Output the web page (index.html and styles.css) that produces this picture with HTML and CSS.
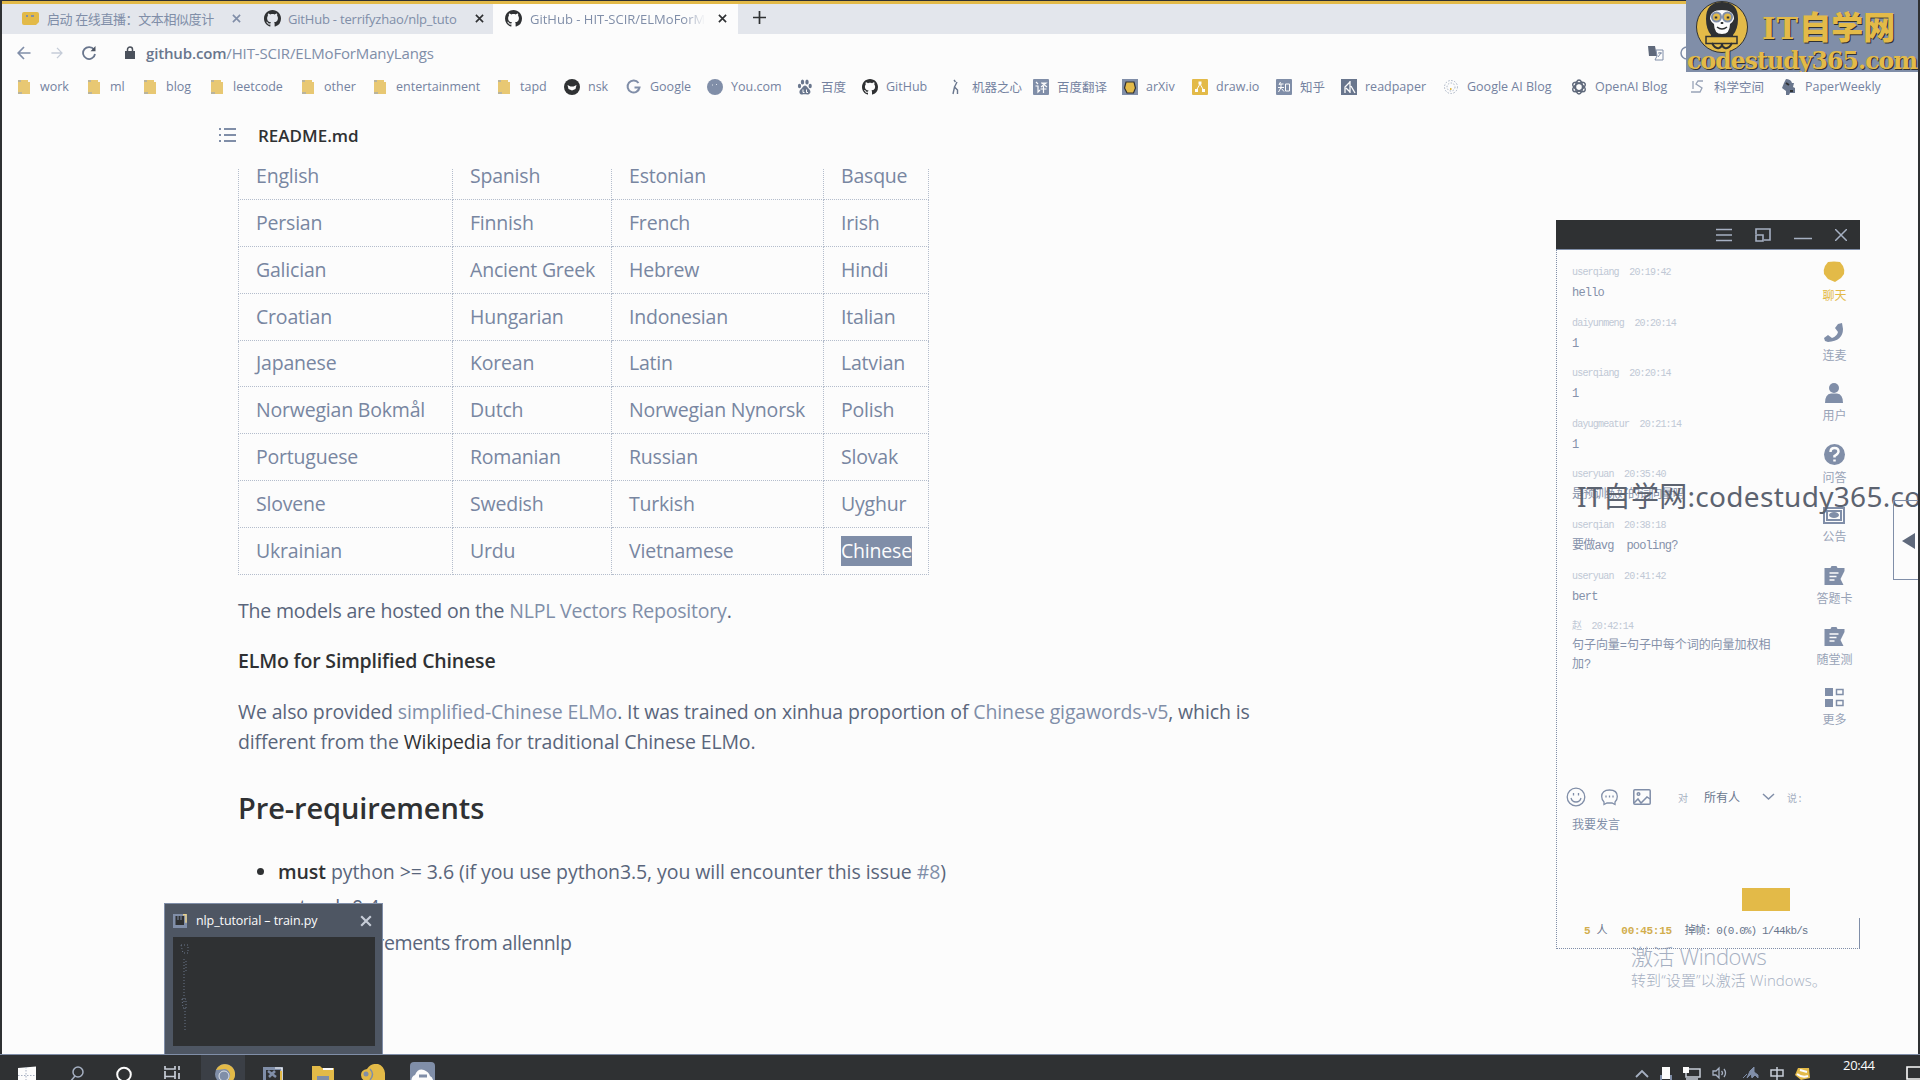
FILE: index.html
```html
<!DOCTYPE html>
<html lang="zh-CN">
<head>
<meta charset="utf-8">
<title>GitHub - HIT-SCIR/ELMoForManyLangs</title>
<link rel="stylesheet" href="styles.css">
</head>
<body>
<svg class="defs" width="0" height="0">
  <symbol id="gh" viewBox="0 0 16 16"><path fill="currentColor" d="M8 0C3.58 0 0 3.58 0 8c0 3.54 2.29 6.53 5.47 7.59.4.07.55-.17.55-.38 0-.19-.01-.82-.01-1.49-2.01.37-2.53-.49-2.69-.94-.09-.23-.48-.94-.82-1.13-.28-.15-.68-.52-.01-.53.63-.01 1.08.58 1.23.82.72 1.21 1.87.87 2.33.66.07-.52.28-.87.51-1.07-1.78-.2-3.64-.89-3.64-3.95 0-.87.31-1.59.82-2.15-.08-.2-.36-1.02.08-2.12 0 0 .67-.21 2.2.82.64-.18 1.32-.27 2-.27s1.36.09 2 .27c1.53-1.04 2.2-.82 2.2-.82.44 1.1.16 1.92.08 2.12.51.56.82 1.27.82 2.15 0 3.07-1.87 3.75-3.65 3.95.29.25.54.73.54 1.48 0 1.07-.01 1.93-.01 2.2 0 .21.15.46.55.38A8.01 8.01 0 0 0 16 8c0-4.42-3.58-8-8-8z"/></symbol>
  <symbol id="folder" viewBox="0 0 16 16"><path fill="#e8c873" d="M2 1h10v2h2v12H2z"/><path fill="#b9b49c" d="M2 1h3v2H2zM2 13h4v2H2z"/></symbol>
  <symbol id="x" viewBox="0 0 10 10"><path d="M1 1l8 8M9 1L1 9" stroke="currentColor" stroke-width="1.8" fill="none"/></symbol>
  <symbol id="clip" viewBox="0 0 20 20"><path fill="currentColor" d="M0 2h6l1-2h5l1 2h7v3l-4 8 3 6H0z"/><path d="M5 7h9M5 10.500h7M5 14h5" stroke="#fcfcfc" stroke-width="1.300"/></symbol>
</svg>
<div class="screen">
  <header class="tabs">
    <div class="tab t1"><svg width="17" height="14" viewBox="0 0 17 14"><path fill="#e3ba48" d="M0 2q0-2 2-2h13q2 0 2 2v8l-3 3H2q-2 0-2-2z"/><path d="M4 4h2M9 4h3" stroke="#808ea8" stroke-width="2"/></svg><span>启动 在线直播：文本相似度计</span><svg class="cl" width="9" height="9"><use href="#x"/></svg></div>
    <div class="tab t2"><svg class="dk" width="17" height="17"><use href="#gh"/></svg><span>GitHub - terrifyzhao/nlp_tuto</span><svg class="cl dk" width="9" height="9"><use href="#x"/></svg></div>
    <div class="tab t3"><svg class="dk" width="17" height="17"><use href="#gh"/></svg><span>GitHub - HIT-SCIR/ELMoForM</span><svg class="cl dk" width="9" height="9"><use href="#x"/></svg></div>
    <div class="plus"><svg width="13" height="13" viewBox="0 0 13 13"><path d="M6.500 0v13M0 6.500h13" stroke="#2f3133" stroke-width="1.700"/></svg></div>
  </header>
  <div class="address">
    <svg width="14" height="14" viewBox="0 0 14 14"><path d="M13.500 7H1.500M7 1L1.200 7 7 13" fill="none" stroke="#808ea8" stroke-width="1.700"/></svg>
    <svg class="fw" width="12" height="12" viewBox="0 0 14 14"><path d="M.5 7h12M7 1l5.800 6L7 13" fill="none" stroke="#c5ccd8" stroke-width="1.500"/></svg>
    <svg class="re" width="14" height="14" viewBox="0 0 14 14"><path d="M12 3.600A6 6 0 1 0 13 8" fill="none" stroke="#69768d" stroke-width="1.800"/><path d="M13.500 0v5.200H8.500z" fill="#4c5462"/></svg>
    <svg class="lock" width="10" height="13" viewBox="0 0 10 13"><path fill="#4b515c" d="M0 5h10v8H0z"/><path d="M2.500 6V3.500a2.500 2.500 0 0 1 5 0V6" fill="none" stroke="#4b515c" stroke-width="1.500"/></svg>
    <span class="url"><b>github.com</b>/HIT-SCIR/ELMoForManyLangs</span>
    <svg class="tr" width="16" height="16" viewBox="0 0 16 16"><path fill="#5f697b" d="M0 1h7l2 10H1z"/><path d="M8 5h7v10H7l2-4z" fill="none" stroke="#808ea8"/><path d="M10 8h4M12 7v1M10 12l3-4" stroke="#808ea8"/></svg>
    <svg class="sr" width="14" height="14" viewBox="0 0 14 14"><circle cx="7" cy="7" r="6" fill="none" stroke="#808ea8" stroke-width="1.500"/></svg>
  </div>
  <nav class="marks">
    <div><svg><use href="#folder"/></svg>work</div>
    <div><svg><use href="#folder"/></svg>ml</div>
    <div><svg><use href="#folder"/></svg>blog</div>
    <div><svg><use href="#folder"/></svg>leetcode</div>
    <div><svg><use href="#folder"/></svg>other</div>
    <div><svg><use href="#folder"/></svg>entertainment</div>
    <div><svg><use href="#folder"/></svg>tapd</div>
    <div><svg viewBox="0 0 16 16"><circle cx="8" cy="8" r="8" fill="#2f3133"/><path fill="#fcfcfc" d="M3.500 6l3 1.500h3l3-1.500-1 4-3.500 1.500L4.500 10z"/></svg>nsk</div>
    <div><svg viewBox="0 0 16 16"><path d="M12.500 4A6 6 0 1 0 13.500 8.500H8.500" fill="none" stroke="#808ea8" stroke-width="2"/></svg>Google</div>
    <div><svg viewBox="0 0 16 16"><circle cx="8" cy="8" r="8" fill="#808ea8"/><path d="M5 6h1M9 5.500h1" stroke="#dde1e8"/></svg>You.com</div>
    <div><svg viewBox="0 0 16 16" fill="#69768d"><ellipse cx="5.500" cy="3" rx="1.700" ry="2.600"/><ellipse cx="10" cy="3" rx="1.700" ry="2.600"/><ellipse cx="2.500" cy="7" rx="1.600" ry="2.200"/><ellipse cx="13.200" cy="7" rx="1.600" ry="2.200"/><path d="M8 6.500c2 0 2.500 2.500 4.500 4 2 2.500.5 5-2 5-1.500 0-3.500-.5-5 0-3 .5-4-3-2-5C5.500 9 6 6.500 8 6.500z"/><path d="M6 10.500v3h1.500M9.500 10.500v3H11" stroke="#fcfcfc" fill="none"/></svg>百度</div>
    <div><svg class="dk"><use href="#gh"/></svg>GitHub</div>
    <div><svg viewBox="0 0 16 16"><path d="M6 1l1.500 2M9 3L6.500 8l3 3v4M6.500 8L5 15" fill="none" stroke="#69768d" stroke-width="1.400"/></svg>机器之心</div>
    <div><svg viewBox="0 0 16 16"><rect width="16" height="16" rx="1" fill="#808ea8"/><path d="M3 3l2 2M2.500 7H5v6l2-2M8 4h5l-5 4M9 4l5 4M7.500 10h6M10.500 7v7" stroke="#fcfcfc" fill="none" stroke-width="1.200"/></svg>百度翻译</div>
    <div><svg viewBox="0 0 16 16"><rect width="16" height="16" fill="#808ea8"/><path fill="#e3ba48" stroke="#2f3133" stroke-width="1.200" d="M4 3h8l1.500 6-2 5H5L2.500 9z"/></svg>arXiv</div>
    <div><svg viewBox="0 0 16 16"><rect width="16" height="16" rx="1" fill="#e3ba48"/><path d="M8 5L4.500 11M8 5l3.500 6" stroke="#fcfcfc"/><path fill="#fcfcfc" d="M6.500 2.500h3v3h-3zM3 10h3v3H3zM10 10h3v3h-3z"/></svg>draw.io</div>
    <div><svg viewBox="0 0 16 16"><rect width="16" height="16" rx="1" fill="#808ea8"/><path d="M4.500 3L3 6M3 5h4.500M2 8.500h6M5 5v3.500L2.500 13M5.500 9.500L8 12.500M9.500 5h4v7h-4z" stroke="#fcfcfc" fill="none"/></svg>知乎</div>
    <div><svg viewBox="0 0 16 16"><path fill="#69768d" d="M0 0h16v16H0z"/><path d="M9 2v12M9 3L4 8v6M5 9l4 4M10 7l4 7" stroke="#fcfcfc" stroke-width="1.300" fill="none"/></svg>readpaper</div>
    <div><svg viewBox="0 0 16 16"><g fill="none" stroke="#a9b3c4" stroke-dasharray="1.500 1.500"><circle cx="8" cy="8" r="6.500"/><circle cx="8" cy="8" r="4"/></g><path d="M7 9h1.500v2H7z" fill="#e3ba48"/></svg>Google AI Blog</div>
    <div><svg viewBox="0 0 16 16"><g fill="none" stroke="#5f697b" stroke-width="1.500"><ellipse cx="8" cy="8" rx="3.500" ry="7"/><ellipse cx="8" cy="8" rx="3.500" ry="7" transform="rotate(60 8 8)"/><ellipse cx="8" cy="8" rx="3.500" ry="7" transform="rotate(120 8 8)"/></g></svg>OpenAI Blog</div>
    <div><svg viewBox="0 0 16 16"><path d="M13 2H8L6 5l6 4-2 4H1M3 2v8" fill="none" stroke="#98a3b7" stroke-width="1.300"/></svg>科学空间</div>
    <div><svg viewBox="0 0 16 16"><path fill="#69768d" d="M5 0c3 0 5 1 6 4h2l-1 4 2 1v5H9l-1 2H5v-4L1 9l2-5z"/><path d="M5 4l3 2M9 12h3" stroke="#2f3133" stroke-width="2"/></svg>PaperWeekly</div>
  </nav>
  <div class="readme">
    <svg width="18" height="16" viewBox="0 0 18 16"><path d="M0 2h2M0 8h2M0 14h2M5 2h12M5 8h12M5 14h12" stroke="#808ea8" stroke-width="1.900"/></svg>
    <span>README.md</span>
  </div>
  <main>
    <table>
      <tr><td>English<td>Spanish<td>Estonian<td>Basque</tr>
      <tr><td>Persian<td>Finnish<td>French<td>Irish</tr>
      <tr><td>Galician<td>Ancient Greek<td>Hebrew<td>Hindi</tr>
      <tr><td>Croatian<td>Hungarian<td>Indonesian<td>Italian</tr>
      <tr><td>Japanese<td>Korean<td>Latin<td>Latvian</tr>
      <tr><td>Norwegian Bokmål<td>Dutch<td>Norwegian Nynorsk<td>Polish</tr>
      <tr><td>Portuguese<td>Romanian<td>Russian<td>Slovak</tr>
      <tr><td>Slovene<td>Swedish<td>Turkish<td>Uyghur</tr>
      <tr><td>Ukrainian<td>Urdu<td>Vietnamese<td><mark>Chinese</mark></tr>
    </table>
    <p class="p1">The models are hosted on the <a>NLPL Vectors Repository</a>.</p>
    <h4>ELMo for Simplified Chinese</h4>
    <p class="p2">We also provided <a>simplified-Chinese ELMo</a>. It was trained on xinhua proportion of <a>Chinese gigawords-v5</a>, which is<br>different from the <i>Wikipedia</i> for traditional Chinese ELMo.</p>
    <h2>Pre-requirements</h2>
    <ul>
      <li><b>must</b> python &gt;= 3.6 (if you use python3.5, you will encounter this issue <a>#8</a>)</li>
      <li>pytorch 0.4</li>
      <li class="last">other requirements from allennlp</li>
    </ul>
  </main>
  <footer class="task">
    <svg class="k1" width="18" height="18" viewBox="0 0 18 18"><path fill="#fcfcfc" d="M0 2l18-1.500V18L0 17z"/><path d="M0 9.500h18M8 1v17" stroke="#a6b0c2" stroke-dasharray="1.500 1.500"/></svg>
    <svg class="k2" width="14" height="18" viewBox="0 0 14 18"><circle cx="8" cy="6" r="5" fill="none" stroke="#a6b0c2" stroke-width="1.500"/><path d="M5 10L0 16" stroke="#a6b0c2" stroke-width="1.500"/></svg>
    <svg class="k3" width="16" height="18" viewBox="0 0 16 18"><circle cx="8" cy="8.500" r="6.800" fill="none" stroke="#fcfcfc" stroke-width="2"/></svg>
    <svg class="k4" width="17" height="16" viewBox="0 0 17 16"><path d="M1 0v3h10V0M1 13V5M11 5v8M1 10.500h10M15 0v4M15 7v6" fill="none" stroke="#c7cdd8" stroke-width="1.700"/></svg>
    <div class="chrome"><svg width="20" height="20" viewBox="0 0 20 20"><circle cx="10" cy="10" r="10" fill="#808ea8"/><path fill="#e3ba48" d="M1 6a10 10 0 1 1 11 14l3-8a6 6 0 0 0-5-7z"/><circle cx="9" cy="12" r="5" fill="#808ea8" stroke="#dde1e8" stroke-width="1"/></svg></div>
    <svg class="k6" width="20" height="20" viewBox="0 0 20 20"><path d="M0 1h20v19H0z" fill="#808ea8"/><path d="M3 4h14v16H3z" fill="#2f3133"/><path d="M5 5l8 6M12 5l-6 6" stroke="#808ea8" stroke-width="2.500" fill="none"/><path d="M12 2h7v14" fill="none" stroke="#fcfcfc" stroke-width="1.200"/><path d="M18 5v10" stroke="#e3ba48" stroke-width="2"/></svg>
    <svg class="k7" width="22" height="18" viewBox="0 0 22 18"><path d="M0 0h8l2 2h12v16H0z" fill="#e3ba48"/><path d="M11 3h10" stroke="#fcfcfc" stroke-width="2"/><path d="M5 10h12v8H5z" fill="#808ea8"/></svg>
    <svg class="k8" width="24" height="20" viewBox="0 0 24 20"><path fill="#e3ba48" d="M6 5q4-6 11-5 6 2 7 9v8H5q-5-1-5-6 0-5 6-6z"/><circle cx="5" cy="10" r="2.500" fill="#808ea8"/><path d="M9 5q5 5 0 11" stroke="#808ea8" stroke-width="1.500" fill="none"/></svg>
    <svg class="k9" width="25" height="22" viewBox="0 0 25 22"><rect width="25" height="26" rx="4" fill="#808ea8"/><path fill="#fcfcfc" d="M2 22q-2-7 3-9 3-7 9-5 5 2 6 6 4 2 3 8z"/><path d="M9 14h8" stroke="#808ea8" stroke-width="3"/></svg>
    <div class="tray">
      <svg width="14" height="14" viewBox="0 0 14 14"><path d="M1 11l6-6 6 6" fill="none" stroke="#a6b0c2" stroke-width="1.800"/></svg>
      <svg width="12" height="14" viewBox="0 0 12 14"><path fill="#fcfcfc" d="M2 1h8v12H2z"/><path fill="#808ea8" d="M0 9h2v5h8V9h2v5H0z"/></svg>
      <svg width="18" height="14" viewBox="0 0 18 14"><path d="M3 3h14v8H3zM3 13h12" fill="none" stroke="#c7cdd8" stroke-width="1.500"/><path fill="#fcfcfc" d="M0 1h6v6H0z"/></svg>
      <svg width="15" height="14" viewBox="0 0 15 14"><path d="M1 5h3l3-3v10L4 9H1zM9.500 5q2 2 0 4M12 3q3 4 0 8" fill="none" stroke="#a6b0c2" stroke-width="1.300"/></svg>
      <svg width="17" height="14" viewBox="0 0 17 14"><path d="M1 12l4-4M5 12l3-7 4-4v5l4 3v3l-3-3-3 3-1-4z" fill="#808ea8" stroke="#808ea8"/></svg>
      <svg width="14" height="14" viewBox="0 0 14 14"><path d="M1 4h12v6H1zM7 1v13" fill="none" stroke="#c7cdd8" stroke-width="1.500"/></svg>
      <svg width="15" height="14" viewBox="0 0 15 14"><path fill="#e3ba48" d="M3 2h11l1 10-9 2-6-5z"/><path d="M2 8q5 4 11 2M5 4l7 2" stroke="#fcfcfc" stroke-width="2" fill="none"/></svg>
      <time>20:44</time>
      <svg width="14" height="14" viewBox="0 0 14 14"><path d="M14 1H1v12h13" fill="none" stroke="#fcfcfc" stroke-width="1.600"/></svg>
    </div>
  </footer>
</div>

<div class="winmark"><div>激活 Windows</div><small>转到“设置”以激活 Windows。</small></div>

<aside class="chat">
  <div class="bar">
    <svg width="16" height="14" viewBox="0 0 16 14"><path d="M0 1.500h16M0 7h16M0 12.500h16" stroke="#a6b0c2" stroke-width="1.500"/></svg>
    <svg width="16" height="14" viewBox="0 0 16 14"><path d="M1 6V1h14v11H9M1 7h7v6H1z" fill="none" stroke="#a6b0c2" stroke-width="1.600"/></svg>
    <svg width="18" height="14" viewBox="0 0 18 14"><path d="M0 10.500h18" stroke="#a6b0c2" stroke-width="1.500"/></svg>
    <svg width="12" height="12" viewBox="0 0 12 12"><path d="M0 0l12 12M12 0L0 12" stroke="#a6b0c2" stroke-width="1.500"/></svg>
  </div>
  <div class="mid">
    <div class="log">
      <dl><dt>userqiang&nbsp; 20:19:42</dt><dd>hello</dd></dl>
      <dl><dt>daiyunmeng&nbsp; 20:20:14</dt><dd>1</dd></dl>
      <dl><dt>userqiang&nbsp; 20:20:14</dt><dd>1</dd></dl>
      <dl><dt>dayugmeatur&nbsp; 20:21:14</dt><dd>1</dd></dl>
      <dl><dt>useryuan&nbsp; 20:35:40</dt><dd>是预训练好的词向量吗</dd></dl>
      <dl><dt>userqian&nbsp; 20:38:18</dt><dd>要做avg&nbsp; pooling?</dd></dl>
      <dl><dt>useryuan&nbsp; 20:41:42</dt><dd>bert</dd></dl>
      <dl><dt>赵&nbsp; 20:42:14</dt><dd>句子向量=句子中每个词的向量加权相<br>加?</dd></dl>
    </div>
    <div class="side">
      <div class="on"><svg width="22" height="22" viewBox="0 0 22 22"><path fill="#e3ba48" d="M5 1q6-1 12 0l3 4q2 4 1 8l-3 4-6 4-7-3-4-5q-1-4 1-8z"/></svg>聊天</div>
      <div><svg width="20" height="20" viewBox="0 0 20 20"><path fill="#808ea8" d="M14 1l4-1 1 6q0 12-15 13l-3-1-1-3 4-3 4 3q5-2 6-6l-3-4z"/></svg>连麦</div>
      <div><svg width="18" height="20" viewBox="0 0 18 20"><circle cx="9" cy="5" r="5" fill="#808ea8"/><path fill="#808ea8" d="M0 20q0-9 6-9.500h6q6 .5 6 9.500z"/></svg>用户</div>
      <div><svg width="21" height="21" viewBox="0 0 21 21"><circle cx="10.500" cy="10.500" r="10.500" fill="#808ea8"/><path d="M6.500 8q0-4 4-4t4 3.500q0 2-4 4.500v1.500M10.500 15.500v2" fill="none" stroke="#fcfcfc" stroke-width="2.500"/></svg>问答</div>
      <div><svg width="22" height="18" viewBox="0 0 22 18"><path d="M1 2h20v15H1zM4 5h14v9H4z" fill="none" stroke="#808ea8" stroke-width="2"/><ellipse cx="11" cy="9" rx="5" ry="3" fill="#808ea8"/></svg>公告</div>
      <div><svg class="cp" width="21" height="20"><use href="#clip"/></svg>答题卡</div>
      <div><svg class="cp" width="21" height="20"><use href="#clip"/></svg>随堂测</div>
      <div><svg width="19" height="19" viewBox="0 0 19 19"><path fill="#808ea8" d="M0 0h8v8H0zM0 11h8v8H0z"/><path d="M11.500 1.500h6.500v5h-6.500zM11.500 12.500h6.500v5h-6.500z" fill="none" stroke="#808ea8" stroke-width="1.500"/></svg>更多</div>
    </div>
  </div>
  <div class="tools">
    <svg width="20" height="20" viewBox="0 0 20 20" fill="none" stroke="#808ea8" stroke-width="1.300"><circle cx="10" cy="10" r="8.800"/><path d="M7.500 6v2.500M12.500 6v2.500M5 11q1 4 5 4t5-4"/></svg>
    <svg width="17" height="17" viewBox="0 0 17 17" fill="none" stroke="#808ea8" stroke-width="1.300"><path d="M3 15.500V13Q.7 11 .7 7.500.7 1 8.500 1t7.800 6.500Q16.300 11 14 13v2.500L11 14H6z"/><path d="M5 6.500v2M8.500 6.500v2M12 6.500v2"/></svg>
    <svg width="18" height="16" viewBox="0 0 18 16" fill="none" stroke="#808ea8" stroke-width="1.500"><rect x=".8" y=".8" width="16.400" height="14.400" rx="1"/><path d="M1 14l4-4 3 4 6-6 3 2"/><circle cx="5.500" cy="5" r="1.300"/></svg>
    <span class="at">对</span><span class="all">所有人</span>
    <svg class="chev" width="13" height="8" viewBox="0 0 13 8"><path d="M1 1l5.500 5L12 1" fill="none" stroke="#808ea8" stroke-width="1.500"/></svg>
    <span class="at">说:</span>
  </div>
  <div class="ph">我要发言</div>
  <button></button>
  <div class="stat"><em>5</em>&nbsp;人<em class="tm">00:45:15</em><span>掉帧: 0(0.0%) 1/44kb/s</span></div>
</aside>

<div class="water">IT自学网:codestudy365.com</div>
<div class="pull"><svg width="13" height="16" viewBox="0 0 13 16"><path fill="#5f697b" d="M13 0v16L0 8z"/></svg></div>

<div class="preview">
  <div class="ptitle"><svg width="14" height="14" viewBox="0 0 14 14"><path fill="#808ea8" d="M0 0h14v14H0z"/><path fill="#2f3133" d="M2.500 2h8.500v9H2.500z"/><path d="M5 2v4M8 2v4" stroke="#808ea8"/><path d="M10 .8h3v8" fill="none" stroke="#e9d28d" stroke-width="1.500"/></svg><span>nlp_tutorial – train.py</span><svg class="px" width="12" height="12"><use href="#x"/></svg></div>
  <div class="pbody"><svg width="10" height="90" viewBox="0 0 10 90" fill="none" stroke="#6b768a" stroke-dasharray="1 2"><path d="M1 1h7v8H3zM4 15v45M6 17v10M2 55h4v9H3zM5 64v22"/></svg></div>
</div>

<div class="logo">
  <svg width="54" height="54" viewBox="0 0 54 54"><circle cx="27" cy="27" r="25.500" fill="#e3ba48" stroke="#2f3133"/><path fill="#2f3133" d="M27 2q16 0 16 17 0 10-5 16v4H16v-4q-5-6-5-16Q11 2 27 2z"/><path fill="#fcfcfc" d="M27 10q12 0 12 9-1 3-4 5 0 10-8 10t-8-10q-3-2-4-5 0-9 12-9z"/><g fill="#e3ba48" stroke="#808ea8" stroke-width="2"><circle cx="21.500" cy="17" r="4.500"/><circle cx="32.500" cy="17" r="4.500"/></g><path d="M21 16.500v2M33 16.500v2M27 22v2" stroke="#2f3133" stroke-width="2.500"/><path d="M22 27q5 4 10 0" fill="none" stroke="#2f3133" stroke-width="1.500"/><path d="M11 36.500h31v7H11z" fill="#e3ba48" stroke="#2f3133" stroke-width="1.500"/><path d="M17 43q3 6 7 5 3-1 3-4 0 3 3 4 4 1 7-5" fill="none" stroke="#2f3133" stroke-width="2"/></svg>
  <div class="l1"><i>IT</i>自学网</div>
  <div class="l2">codestudy365.com</div>
</div>
</body>
</html>
```
FILE: styles.css
```css
* { box-sizing: border-box; }
body { margin: 0; width: 1920px; height: 1080px; overflow: hidden; position: relative; background: #fcfcfc; color: #69768d; font-family: "Open Sans", "Noto Sans CJK SC", sans-serif; }
svg { display: block; flex: none; }
.defs { position: absolute; }
.dk { color: #2f3133; }
.screen { width: 1920px; height: 1080px; border: 2px solid #2f3133; border-width: 1px 2px 0; display: flex; flex-direction: column; }
.tabs { height: 33px; border-top: 3px solid #e3ba48; display: flex; flex: none; }
.tab { display: flex; align-items: center; font-size: 13px; white-space: nowrap; background: #e3e6ec; color: #808ea8; padding-bottom: 1px; }
.tab span { overflow: hidden; }
.t1 { width: 252px; padding-left: 20px; }
.t1 span { width: 172px; margin-left: 8px; letter-spacing: -.4px; }
.t2 { width: 239px; padding-left: 10px; }
.t2 span { width: 174px; margin-left: 7px; letter-spacing: -.2px; }
.t3 { width: 245px; padding-left: 12px; background: #fcfcfc; }
.t3 span { width: 175px; margin-left: 8px; -webkit-mask-image: linear-gradient(90deg, #000 88%, transparent); mask-image: linear-gradient(90deg, #000 88%, transparent); }
.cl { margin-left: 13px; }
.plus { flex: 1; background: #e3e6ec; padding: 7px 0 0 15px; }
.address { height: 37px; flex: none; display: flex; align-items: center; padding-left: 15px; font-size: 15px; color: #808ea8; }
.fw { margin-left: 20px; }
.re { margin-left: 19px; }
.lock { margin-left: 29px; }
.url { margin-left: 11px; width: 1502px; letter-spacing: -.15px; }
.url b { font-weight: 600; color: #69768d; }
.sr { margin-left: 16px; }
.marks { height: 31px; flex: none; padding-left: 14px; display: grid; grid-template-columns: 70px 56px 67px 91px 72px 124px 68px 62px 81px 90px 65px 86px 85px 89px 70px 84px 65px 102px 128px 119px 91px 130px; align-items: center; font-size: 12.500px; color: #7482a0; }
.marks div { display: flex; align-items: center; gap: 8px; white-space: nowrap; }
.marks svg { width: 16px; height: 16px; }
.readme { height: 66px; flex: none; display: flex; align-items: center; padding-left: 217px; gap: 21px; font-size: 17px; font-weight: 600; color: #2f3133; }
main { padding-left: 236px; flex: 1; min-height: 0; overflow: hidden; font-size: 19.500px; letter-spacing: -.13px; color: #59657b; }
table { border-collapse: collapse; table-layout: fixed; width: 690px; margin-top: -16px; color: #7886a1; letter-spacing: -.2px; }
td { height: 46.875px; padding: 0 0 0 17px; border: 1px dotted #b4bdcc; white-space: nowrap; line-height: 30px; }
td:nth-child(1) { width: 214px; } td:nth-child(2) { width: 159px; } td:nth-child(3) { width: 212px; } td:nth-child(4) { width: 105px; }
mark { background: #808ea8; color: #fcfcfc; display: inline-block; height: 30px; }
p, h2, h4 { margin: 0; white-space: nowrap; }
a { color: #808ea8; }
.p1 { margin-top: 21px; line-height: 30px; letter-spacing: -.2px; }
h4 { margin-top: 20px; line-height: 30px; font-weight: 600; letter-spacing: -.17px; color: #2f3133; }
.p2 { margin-top: 21px; line-height: 30.500px; }
.p2 i { font-style: normal; color: #2f3133; }
h2 { margin-top: 31px; font-size: 29px; letter-spacing: -.1px; line-height: 38px; font-weight: 600; color: #2f3133; }
ul { margin: 30px 0 0; padding-left: 40px; letter-spacing: -.08px; }
li { line-height: 30px; margin-bottom: 5px; white-space: nowrap; }
.last { padding-top: 1px; letter-spacing: -.37px; }
li::marker, li b { color: #2f3133; font-weight: 600; }
.task { height: 26px; margin: 0 -2px; flex: none; background: #2f3133; border-top: 1px solid #808ea8; overflow: hidden; display: flex; align-items: flex-start; padding-left: 18px; }
.task svg { margin-top: 11px; }
.task .k2 { margin-left: 34px; } .task .k3 { margin-left: 32px; } .task .k4 { margin-left: 32px; }
.chrome { width: 44px; height: 26px; margin-left: 20px; background: #3b3f46; padding-left: 14px; }
.task .chrome svg, .task .k8 { margin-top: 9px; }
.task .k6 { margin-left: 18px; } .task .k7 { margin-left: 29px; } .task .k8 { margin-left: 27px; } .task .k9 { margin: 7px 0 0 25px; }
.tray { margin-left: auto; display: flex; gap: 11px; color: #fcfcfc; }
.tray svg:nth-child(5) { margin-left: 4px; }
.tray time { font-size: 13px; line-height: 20px; width: 31px; margin: 0 21px 0 22px; letter-spacing: -.3px; }
.winmark { position: absolute; left: 1631px; top: 940px; color: #a6b0c2; font-size: 22px; line-height: 32px; font-weight: 300; letter-spacing: -.4px; }
.winmark small { font-size: 15px; display: block; line-height: 18px; margin-top: -1px; letter-spacing: .1px; white-space: nowrap; }
.chat { position: absolute; left: 1556px; top: 220px; width: 304px; height: 729px; border: 1px dotted #808ea8; border-width: 0 0 1px 1px; font-size: 12px; font-family: "Liberation Mono", "Noto Sans CJK SC", monospace; }
.bar { height: 30px; margin-left: -1px; background: #2f3133; border-bottom: 1px solid #808ea8; display: flex; justify-content: flex-end; align-items: center; gap: 23px; padding-right: 13px; }
.mid { display: flex; height: 534px; }
.log { padding: 12px 0 0 15px; width: 249px; font-size: 12px; color: #8591aa; }
dl { margin: 0 0 9px; white-space: nowrap; letter-spacing: -.8px; }
dl:last-child dd { letter-spacing: -.05px; line-height: 19px; }
dt { font-size: 10px; line-height: 21px; color: #c0c8d5; }
dd { margin: 0; line-height: 20.600px; }
.side { width: 58px; margin-left: 1px; padding: 3px 0 0 6px; font-size: 12px; }
.side div { height: 60.800px; display: flex; flex-direction: column; align-items: center; justify-content: center; gap: 6px; color: #98a3b7; line-height: 17px; }
.side .cp { color: #808ea8; }
.side .on { color: #e3ba48; }
.tools { height: 28px; display: flex; align-items: center; padding-left: 9px; margin-top: -1px; }
.tools svg + svg { margin-left: 15px; }
.tools .at { margin-left: 27px; font-size: 10px; color: #a6b0c2; } .all { margin-left: 16px; color: #69768d; }
.tools .chev { margin-left: 22px; } .tools .chev + .at { margin-left: 12px; }
.ph { padding: 5px 0 0 15px; line-height: 20px; color: #808ea8; }
.chat button { display: block; width: 48px; height: 23px; margin: 52px 0 0 185px; border: 0; background: #e3ba48; }
.stat { display: flex; padding: 3px 0 0 27px; line-height: 20px; height: 30px; white-space: nowrap; border-right: 1px solid #808ea8; margin: 7px 0 0; font-size: 11px; letter-spacing: -.3px; }
.stat em { font-style: normal; color: #d2ae4e; font-weight: 700; } .stat .tm { margin-left: 14px; } .stat span { margin-left: 13px; letter-spacing: -.9px; }
.water { position: absolute; left: 1577px; top: 475px; width: 341px; overflow: hidden; white-space: nowrap; font-size: 28px; line-height: 42px; letter-spacing: .3px; color: #5c6370; font-family: "Noto Sans", "Noto Sans CJK SC", sans-serif; }
.pull { position: absolute; left: 1893px; top: 500px; width: 25px; height: 80px; border: 1px solid #808ea8; border-right: 0; padding: 32px 0 0 8px; }
.preview { position: absolute; left: 164px; top: 903px; width: 219px; height: 151px; background: #4e5663; border: 1px solid #808ea8; border-bottom: 0; padding: 0 7px 8px 8px; color: #fcfcfc; display: flex; flex-direction: column; }
.ptitle { height: 33px; display: flex; align-items: center; font-size: 12.500px; }
.ptitle span { margin-left: 9px; width: 156px; white-space: nowrap; letter-spacing: -.1px; }
.px { color: #c7cdd8; margin-left: 8px; }
.pbody { flex: 1; background: #2f3133; padding: 7px; }
.logo { position: absolute; left: 1686px; top: 0; width: 232px; height: 72px; background: #808ea8; color: #e3ba48; overflow: hidden; display: grid; grid-template: 52px 20px / 76px 1fr; }
.logo svg { margin-left: 9px; }
.l1 { font-family: "Noto Sans CJK SC", sans-serif; font-weight: 900; font-size: 32px; line-height: 51px; white-space: nowrap; text-shadow: 1px 1px #2f3133; }
.l1 i { font-style: normal; font-family: "DejaVu Serif", serif; font-weight: 700; font-size: 29px; letter-spacing: 1px; }
.l2 { grid-column: 1 / 3; padding-left: 1px; font-family: "DejaVu Serif", serif; font-weight: 700; font-size: 23.500px; line-height: 19px; letter-spacing: -.9px; white-space: nowrap; text-shadow: 1px 1px #2f3133; }
```
